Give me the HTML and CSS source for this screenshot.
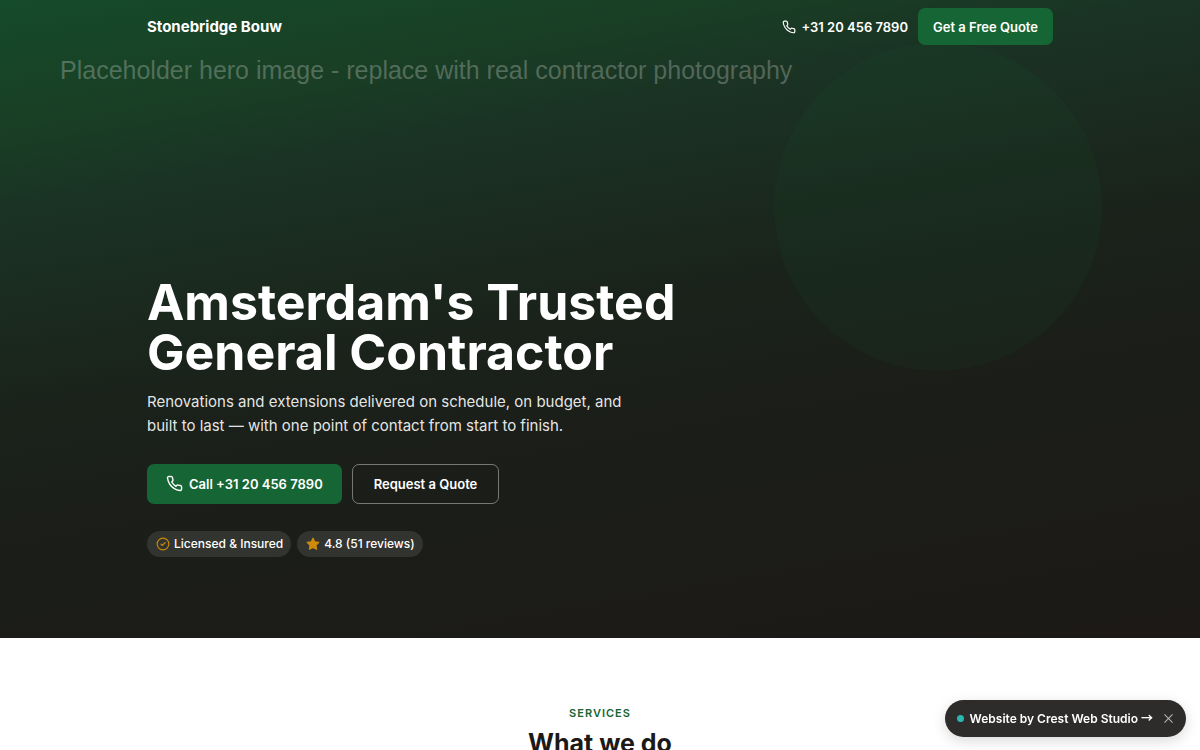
FILE: index.html
```html
<!DOCTYPE html>
<html lang="en">
<head>
  <meta charset="UTF-8">
  <meta name="viewport" content="width=device-width, initial-scale=1.0">
  <title>Stonebridge Bouw</title>
  <link rel="stylesheet" href="styles.css">
</head>
<body>

<header class="site-header">
  <div class="container header-inner">
    <a href="#" class="brand">Stonebridge Bouw</a>
    <div class="header-actions">
      <a href="tel:+31204567890" class="header-phone">
        <svg class="icon" viewBox="0 0 24 24"><path d="M22 16.92v3a2 2 0 0 1-2.18 2 19.79 19.79 0 0 1-8.63-3.07 19.5 19.5 0 0 1-6-6 19.79 19.79 0 0 1-3.07-8.67A2 2 0 0 1 4.11 2h3a2 2 0 0 1 2 1.72 12.84 12.84 0 0 0 .7 2.81 2 2 0 0 1-.45 2.11L8.09 9.91a16 16 0 0 0 6 6l1.27-1.27a2 2 0 0 1 2.11-.45 12.84 12.84 0 0 0 2.81.7A2 2 0 0 1 22 16.92z"/></svg>
        +31 20 456 7890
      </a>
      <a href="#quote" class="button button-small">Get a Free Quote</a>
    </div>
  </div>
</header>

<section class="hero">
  <!-- Background -->
  <div class="hero-circle"></div>
  <p class="hero-placeholder">Placeholder hero image - replace with real contractor photography</p>

  <div class="container hero-content">
    <h1>Amsterdam's Trusted General Contractor</h1>
    <p class="hero-text">Renovations and extensions delivered on schedule, on budget, and built to last — with one point of contact from start to finish.</p>
    <div class="hero-buttons">
      <a href="tel:+31204567890" class="button">
        <svg class="icon icon-large" viewBox="0 0 24 24"><path d="M22 16.92v3a2 2 0 0 1-2.18 2 19.79 19.79 0 0 1-8.63-3.07 19.5 19.5 0 0 1-6-6 19.79 19.79 0 0 1-3.07-8.67A2 2 0 0 1 4.11 2h3a2 2 0 0 1 2 1.72 12.84 12.84 0 0 0 .7 2.81 2 2 0 0 1-.45 2.11L8.09 9.91a16 16 0 0 0 6 6l1.27-1.27a2 2 0 0 1 2.11-.45 12.84 12.84 0 0 0 2.81.7A2 2 0 0 1 22 16.92z"/></svg>
        Call +31 20 456 7890
      </a>
      <a href="#quote" class="button button-outline">Request a Quote</a>
    </div>
    <ul class="badges">
      <li class="badge">
        <svg class="icon badge-check" viewBox="0 0 24 24"><circle cx="12" cy="12" r="10"/><path d="M8.5 12.3l2.3 2.2 4.7-4.7"/></svg>
        Licensed &amp; Insured
      </li>
      <li class="badge">
        <svg class="icon badge-star" viewBox="0 0 24 24"><path d="M12 2l3.09 6.26L22 9.27l-5 4.87 1.18 6.88L12 17.77l-6.18 3.25L7 14.14 2 9.27l6.91-1.01L12 2z"/></svg>
        4.8 (51 reviews)
      </li>
    </ul>
  </div>
</section>

<section class="services">
  <p class="eyebrow">Services</p>
  <h2>What we do</h2>
</section>

<div class="credit">
  <a href="#" class="credit-link"><span class="credit-dot"></span><span>Website by Crest Web Studio <span class="credit-arrow">→</span></span></a>
  <button type="button" class="credit-close" aria-label="Close">
    <svg class="icon icon-close" viewBox="0 0 24 24"><path d="M5 5l14 14M19 5L5 19"/></svg>
  </button>
</div>

</body>
</html>
```
FILE: styles.css
```css
* {
  box-sizing: border-box;
}

body {
  font-family: Inter, "Liberation Sans", sans-serif;
  font-size: 16px;
  color: #1c1917;
  background: #fff;
  margin: 0;
}

h1, h2, p, ul {
  margin: 0;
  padding: 0;
}

a {
  color: inherit;
  text-decoration: none;
}

.container {
  width: 100%;
  max-width: 946px;
  margin: 0 auto;
  padding: 0 20px;
}

.icon {
  width: 14px;
  height: 14px;
  flex: none;
  fill: none;
  stroke: currentColor;
  stroke-width: 2;
  stroke-linecap: round;
  stroke-linejoin: round;
}

.icon-large {
  width: 17px;
  height: 17px;
}

.icon-close {
  width: 13px;
  height: 13px;
}

/* Header, sits over the hero */
.site-header {
  position: absolute;
  top: 0;
  left: 0;
  right: 0;
  z-index: 2;
  color: #fff;
}

.header-inner {
  display: flex;
  justify-content: space-between;
  align-items: center;
  padding-top: 8px;
  padding-bottom: 8px;
}

.brand {
  font-size: 15px;
  font-weight: 700;
}

.header-actions {
  display: flex;
  align-items: center;
  gap: 10px;
}

.header-phone {
  display: flex;
  align-items: center;
  gap: 5px;
  font-size: 13px;
  font-weight: 600;
}

.button {
  display: inline-flex;
  align-items: center;
  justify-content: center;
  gap: 6px;
  height: 40px;
  padding: 0 19px;
  border-radius: 7px;
  background: #166534;
  color: #fff;
  font-size: 13px;
  font-weight: 600;
  white-space: nowrap;
}

.button-small {
  height: 37px;
  padding: 0 15px;
}

.button-outline {
  padding: 0 21px;
  background: transparent;
  border: 1px solid rgba(255, 255, 255, 0.4);
}

/* Hero */
.hero {
  position: relative;
  min-height: 85vh;
  display: flex;
  align-items: flex-end;
  padding: 100px 0 81px;
  overflow: hidden;
  color: #fff;
  background: linear-gradient(170deg, #154a2a 0%, #193f25 15%, #1a3424 24%, #1b2b20 36%, #1a231b 48%, #1b1e19 62%, #1c1917 100%);
}

.hero-circle {
  position: absolute;
  top: 43px;
  left: 774px;
  width: 328px;
  height: 328px;
  border-radius: 50%;
  background: rgba(22, 101, 52, 0.1);
}

.hero-placeholder {
  position: absolute;
  top: 55px;
  left: 60px;
  font-family: "Liberation Sans", Arial, sans-serif;
  font-size: 25px;
  line-height: 30px;
  white-space: nowrap;
  color: rgba(255, 255, 255, 0.25);
}

.hero-content {
  position: relative;
}

h1 {
  max-width: 600px;
  font-size: 50px;
  line-height: 50px;
  font-weight: 700;
}

.hero-text {
  max-width: 500px;
  margin-top: 13px;
  font-size: 15px;
  line-height: 24px;
  color: rgba(255, 255, 255, 0.9);
}

.hero-buttons {
  display: flex;
  flex-wrap: wrap;
  gap: 10px;
  margin-top: 26px;
}

.badges {
  display: flex;
  flex-wrap: wrap;
  gap: 6px;
  margin-top: 27px;
  list-style: none;
}

.badge {
  display: flex;
  align-items: center;
  gap: 4px;
  height: 26px;
  padding: 0 8px 0 9px;
  border-radius: 13px;
  background: rgba(255, 255, 255, 0.1);
  font-size: 12px;
  font-weight: 500;
}

.badge-check {
  color: #ca8a04;
}

.badge-star {
  color: #d08a0a;
  fill: currentColor;
}

/* Services */
.services {
  padding: 67px 20px 80px;
  text-align: center;
}

.eyebrow {
  font-size: 11px;
  line-height: 16px;
  font-weight: 600;
  letter-spacing: 1px;
  text-transform: uppercase;
  color: #166534;
}

h2 {
  margin-top: 5px;
  font-size: 25px;
  line-height: 34px;
  font-weight: 700;
}

/* Credit pill */
.credit {
  position: fixed;
  right: 14px;
  bottom: 13px;
  z-index: 3;
  display: flex;
  align-items: center;
  gap: 9px;
  height: 37px;
  padding: 0 11px 0 12px;
  border-radius: 19px;
  background: #2e2c2a;
  color: #fff;
  box-shadow: 0 4px 14px rgba(0, 0, 0, 0.15);
}

.credit-link {
  display: flex;
  align-items: center;
  gap: 6px;
  font-size: 12px;
  font-weight: 600;
}

.credit-dot {
  width: 7px;
  height: 7px;
  border-radius: 50%;
  background: #2bb8b0;
}

.credit-arrow {
  font-family: "Noto Sans CJK JP", "DejaVu Sans", sans-serif;
  line-height: 1;
}

.credit-close {
  display: flex;
  padding: 0;
  border: none;
  background: none;
  color: #b5b2af;
  cursor: pointer;
}
```
